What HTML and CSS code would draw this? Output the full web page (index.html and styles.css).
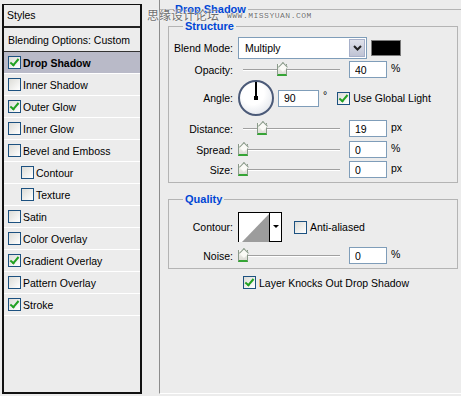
FILE: index.html
```html
<!DOCTYPE html>
<html lang="en">
<head>
    <meta charset="UTF-8">
    <title>Layer Style - Drop Shadow</title>
    <link rel="stylesheet" href="styles.css">
</head>
<body>
    <div class="dialog">
        <!-- Styles list -->
        <div class="styles-panel">
            <div class="panel-head">Styles</div>
            <div class="panel-item blending">Blending Options: Custom</div>
            <div class="panel-item active"><span class="cb on"></span><b>Drop Shadow</b></div>
            <div class="panel-item"><span class="cb"></span>Inner Shadow</div>
            <div class="panel-item"><span class="cb on"></span>Outer Glow</div>
            <div class="panel-item"><span class="cb"></span>Inner Glow</div>
            <div class="panel-item"><span class="cb"></span>Bevel and Emboss</div>
            <div class="panel-item sub"><span class="cb"></span>Contour</div>
            <div class="panel-item sub"><span class="cb"></span>Texture</div>
            <div class="panel-item"><span class="cb"></span>Satin</div>
            <div class="panel-item"><span class="cb"></span>Color Overlay</div>
            <div class="panel-item"><span class="cb on"></span>Gradient Overlay</div>
            <div class="panel-item"><span class="cb"></span>Pattern Overlay</div>
            <div class="panel-item"><span class="cb on"></span>Stroke</div>
        </div>

        <!-- Options -->
        <div class="options">
            <fieldset class="outer">
                <legend>Drop Shadow</legend>

                <fieldset class="box structure">
                    <legend>Structure</legend>
                    <div class="row blend">
                        <label>Blend Mode:</label>
                        <div class="select">
                            <span class="select-value">Multiply</span>
                            <span class="select-btn">
                                <svg width="9" height="6" viewBox="0 0 9 6"><path d="M1 1 L4.5 4.5 L8 1" fill="none" stroke="#222" stroke-width="2"/></svg>
                            </span>
                        </div>
                        <span class="swatch"></span>
                    </div>
                    <div class="row">
                        <label>Opacity:</label>
                        <div class="slider"><span class="thumb" style="left: 39px"></span></div>
                        <input class="num" type="text" value="40">
                        <span class="unit">%</span>
                    </div>
                    <div class="row angle">
                        <label>Angle:</label>
                        <div class="dial"></div>
                        <input class="num wide" type="text" value="90">
                        <span class="deg">°</span>
                        <span class="cb on"></span>
                        <span class="cb-text">Use Global Light</span>
                    </div>
                    <div class="row r-distance">
                        <label>Distance:</label>
                        <div class="slider"><span class="thumb" style="left: 19px"></span></div>
                        <input class="num" type="text" value="19">
                        <span class="unit">px</span>
                    </div>
                    <div class="row r-spread">
                        <label>Spread:</label>
                        <div class="slider"><span class="thumb" style="left: 0px"></span></div>
                        <input class="num" type="text" value="0">
                        <span class="unit">%</span>
                    </div>
                    <div class="row r-size">
                        <label>Size:</label>
                        <div class="slider"><span class="thumb" style="left: 0px"></span></div>
                        <input class="num" type="text" value="0">
                        <span class="unit">px</span>
                    </div>
                </fieldset>

                <fieldset class="box quality">
                    <legend>Quality</legend>
                    <div class="row contour">
                        <label>Contour:</label>
                        <div class="contour-pick">
                            <svg class="contour-preview" width="30" height="29" viewBox="0 0 30 29">
                                <rect width="30" height="29" fill="#fff"/>
                                <polygon points="3,29 30,1 30,29" fill="#9c9c9c"/>
                            </svg>
                            <span class="contour-arrow"></span>
                        </div>
                        <span class="cb"></span>
                        <span class="cb-text">Anti-aliased</span>
                    </div>
                    <div class="row r-noise">
                        <label>Noise:</label>
                        <div class="slider"><span class="thumb" style="left: 0px"></span></div>
                        <input class="num" type="text" value="0">
                        <span class="unit">%</span>
                    </div>
                </fieldset>

                <div class="knockout"><span class="cb on"></span><span class="cb-text">Layer Knocks Out Drop Shadow</span></div>
            </fieldset>

            <div class="watermark"><span class="wm-cn">思缘设计论坛</span><span class="wm-en">WWW.MISSYUAN.COM</span></div>
        </div>
    </div>
</body>
</html>
```

FILE: styles.css
```css
* {
    box-sizing: border-box;
    margin: 0;
    padding: 0;
}
body {
    width: 461px;
    height: 396px;
    overflow: hidden;
    background-color: #ececec;
    font-family: "Liberation Sans", Arial, sans-serif;
    font-size: 10.5px;
    color: #000;
}
.dialog {
    display: flex;
    align-items: flex-start;
}

/* left list */
.styles-panel {
    width: 140px;
    height: 390px;
    margin: 4px 0 0 2px;
    border: 2px solid #111;
    border-top-width: 1px;
}
.panel-head {
    height: 23px;
    line-height: 21px;
    padding-left: 3px;
    border-bottom: 2px solid #222;
}
.panel-item {
    display: flex;
    align-items: center;
    height: 22px;
    padding-left: 4px;
    border-bottom: 1px solid #fff;
}
.panel-item.blending {
    height: 24px;
    border-bottom: 1px solid #333;
}
.panel-item.active {
    background-color: #b9bac8;
}
.panel-item.sub {
    padding-left: 17px;
}
.panel-item .cb {
    margin-right: 2px;
}

/* checkboxes */
.cb {
    position: relative;
    display: inline-block;
    flex: none;
    width: 13px;
    height: 13px;
    border: 1px solid #1c5180;
    background: linear-gradient(135deg, #dcdcd7, #fff);
}
.cb.on::after {
    content: "";
    position: absolute;
    left: 3px;
    top: 0px;
    width: 3px;
    height: 7px;
    border: solid #21a121;
    border-width: 0 2px 2px 0;
    transform: rotate(40deg);
}
.cb-text {
    margin-left: 3px;
}

/* right options */
.options {
    position: relative;
    width: 302px;
    height: 394px;
    margin-left: 17px;
    border-left: 1px solid #8c8c8c;
    border-bottom: 1px solid #fff;
}
fieldset {
    min-width: 0;
}
legend {
    font-size: 11px;
    font-weight: bold;
    line-height: 13px;
    color: #0046d5;
    padding: 0 2px;
}
.outer {
    margin-top: 3px;
    padding-left: 8px;
    border: 0;
    border-top: 1px solid #b4b4b4;
}
.outer > legend {
    margin-left: 5px;
}
.box {
    width: 290px;
    border: 1px solid #b4b4b4;
    padding-bottom: 4px;
}
.box > legend {
    margin-left: 14px;
}
.structure {
    margin-top: 4px;
}
.quality {
    margin-top: 10px;
}

.row {
    display: flex;
    align-items: center;
    height: 17px;
}
.row label {
    width: 64px;
    margin-right: 5px;
    text-align: right;
    flex: none;
}
.row.blend {
    height: 22px;
    margin-top: 4px;
}
.row + .row {
    margin-top: 2px;
}
.row.angle {
    height: 36px;
}
.row.r-distance,
.row.r-spread {
    margin-top: 4px;
}
.row.r-size {
    margin-top: 3px;
}

.select {
    display: flex;
    width: 129px;
    height: 22px;
    border: 1px solid #7f9db9;
    background-color: #fff;
}
.select-value {
    flex: 1;
    line-height: 20px;
    padding-left: 6px;
}
.select-btn {
    display: flex;
    align-items: center;
    justify-content: center;
    width: 16px;
    margin: 1px;
    background: linear-gradient(#dfe1ea, #bfc3d4);
    border: 1px solid #a7b0c9;
}
.swatch {
    width: 30px;
    height: 16px;
    margin-left: 4px;
    background-color: #000;
    border: 1px solid #7a7a7a;
}

.slider {
    position: relative;
    width: 102px;
    height: 17px;
    margin-right: 9px;
}
.slider::before {
    content: "";
    position: absolute;
    left: 5px;
    right: 0;
    top: 8px;
    height: 1px;
    background-color: #a0a0a0;
    border-bottom: 1px solid #fff;
    box-sizing: content-box;
}
.thumb {
    position: absolute;
    top: 3px;
    width: 10px;
    height: 12px;
    border: 1px solid #8a9a8a;
    border-top: 0;
    border-bottom: 2px solid #35a535;
    background: linear-gradient(#fafaf6, #dcdcd6);
}
.thumb::before {
    content: "";
    position: absolute;
    left: -1px;
    top: -4px;
    width: 6px;
    height: 6px;
    border-left: 1px solid #8a9a8a;
    border-top: 1px solid #8a9a8a;
    background-color: #fafaf6;
    transform: translateX(1px) rotate(45deg);
    transform-origin: 0 100%;
}
.num {
    width: 38px;
    height: 17px;
    border: 1px solid #7f9db9;
    padding-left: 5px;
    font-family: inherit;
    font-size: 10.5px;
    color: #000;
    background-color: #fff;
    outline: none;
}
.num.wide {
    width: 41px;
}
.unit {
    margin-left: 4px;
    margin-top: -4px;
}

.dial {
    position: relative;
    width: 36px;
    height: 36px;
    margin-right: 4px;
    border: 2px solid #4b5a78;
    border-radius: 50%;
    background: radial-gradient(circle at 40% 35%, #fff 40%, #d8dce4);
}
.dial::before {
    content: "";
    position: absolute;
    left: 15px;
    top: 0;
    width: 2px;
    height: 16px;
    background-color: #000;
}
.dial::after {
    content: "";
    position: absolute;
    left: 14px;
    top: 14px;
    width: 4px;
    height: 4px;
    background-color: #000;
}
.deg {
    margin: -6px 10px 0 4px;
}

.row.contour {
    height: 30px;
    margin-top: 6px;
}
.contour-pick {
    display: flex;
    height: 30px;
    border: 1px solid #000;
    margin-right: 12px;
}
.contour-arrow {
    position: relative;
    width: 12px;
    background-color: #fff;
    border-left: 1px solid #000;
}
.contour-arrow::after {
    content: "";
    position: absolute;
    left: 3px;
    top: 12px;
    border-left: 3px solid transparent;
    border-right: 3px solid transparent;
    border-top: 3px solid #000;
}
.row.r-noise {
    margin-top: 5px;
}

.knockout {
    display: flex;
    align-items: center;
    margin: 7px 0 0 75px;
}

.watermark {
    position: absolute;
    left: -13px;
    top: 7px;
    display: flex;
    align-items: center;
    color: #6e6e6e;
    text-shadow: 0 0 2px #fff, 0 0 1px #fff;
    pointer-events: none;
}
.wm-cn {
    font-family: "Noto Sans CJK SC", sans-serif;
    font-size: 12px;
    line-height: 16px;
}
.wm-en {
    margin-left: 8px;
    font-family: "Liberation Mono", monospace;
    font-size: 8px;
    letter-spacing: 0.5px;
}
```
